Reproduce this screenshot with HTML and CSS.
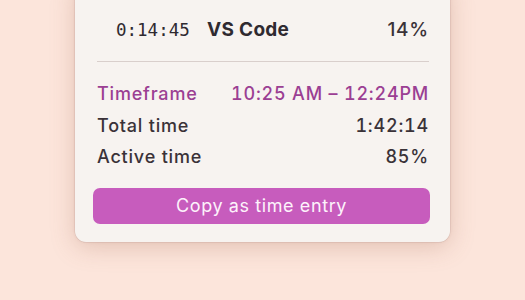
FILE: index.html
```html
<!DOCTYPE html>
<html>
<head>
<meta charset="utf-8">
<link rel="stylesheet" href="styles.css">
</head>
<body>
<div class="card">
  <div class="app-row">
    <span class="dur">0:14:45</span>
    <span class="app">VS Code</span>
    <span class="pct">14%</span>
  </div>
  <div class="divider"></div>
  <div class="stats">
    <div class="stat accent"><span>Timeframe</span><span>10:25 AM – 12:24PM</span></div>
    <div class="stat"><span>Total time</span><span>1:42:14</span></div>
    <div class="stat"><span>Active time</span><span>85%</span></div>
  </div>
  <button class="copy">Copy as time entry</button>
</div>
</body>
</html>
```
FILE: styles.css
```css
html, body {
  margin: 0;
  padding: 0;
}
body {
  background: #fce5db;
  height: 300px;
  overflow: hidden;
  font-family: Inter, "Noto Sans", sans-serif;
  color: #3a3238;
}
.card {
  margin: -20px 0 0 75px;
  width: 375px;
  box-sizing: border-box;
  padding: 39px 20px 18px 18px;
  background: #f7f3f0;
  border-radius: 11px;
  box-shadow: 0 0 0 0.5px rgba(120, 80, 70, 0.14), 0 0 3px rgba(140, 90, 80, 0.12), 0 5px 24px rgba(160, 100, 80, 0.28);
}
.app-row {
  display: grid;
  grid-template-columns: 91px 1fr auto;
  padding: 0 1px 0 23px;
  line-height: 22px;
  height: 22px;
  align-items: baseline;
}
.dur {
  font-family: "DejaVu Sans Mono", monospace;
  font-size: 17.5px;
  color: #2f2a30;
}
.app {
  font-size: 19px;
  font-weight: 700;
  letter-spacing: 0.3px;
  color: #2f2a30;
}
.pct {
  font-size: 19px;
  font-weight: 500;
  letter-spacing: 0.8px;
}
.divider {
  margin: 20px 1px 0 4px;
  height: 1px;
  background: #d9cfcc;
}
.stats {
  margin-top: 16px;
  padding: 0 1px 0 4px;
}
.stat {
  display: flex;
  justify-content: space-between;
  line-height: 31.5px;
  font-size: 18px;
  font-weight: 500;
  letter-spacing: 0.8px;
  font-variant-numeric: tabular-nums;
}
.stat.accent {
  color: #9b3f93;
}
.copy {
  display: block;
  width: 100%;
  margin-top: 15px;
  height: 36px;
  border: none;
  border-radius: 7px;
  background: #c75cbd;
  color: #fdf2fb;
  font-family: Inter, "Noto Sans", sans-serif;
  font-size: 18px;
  font-weight: 400;
  letter-spacing: 0.6px;
  padding: 0;
}
```
